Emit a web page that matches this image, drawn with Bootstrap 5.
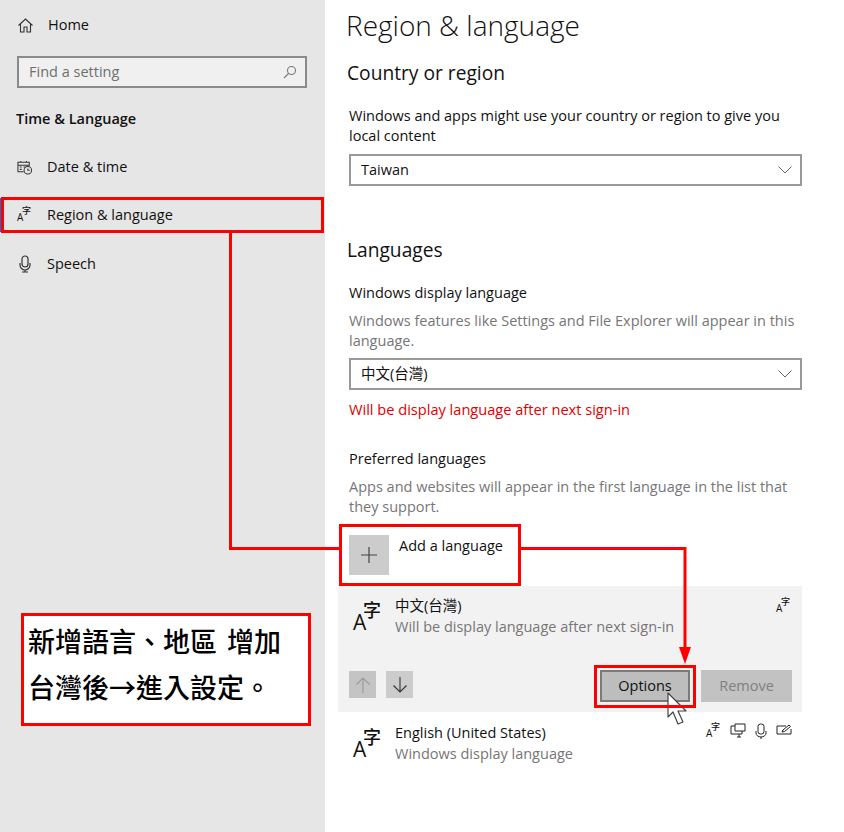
<!DOCTYPE html>
<html lang="en"><head><meta charset="utf-8"><title>Region &amp; language</title>
<link href="https://cdn.jsdelivr.net/npm/bootstrap@5.3.0/dist/css/bootstrap.min.css" rel="stylesheet">
<style>
html,body{margin:0;background:#fff;}
body{font-family:"Open Sans","Noto Sans CJK TC",sans-serif;font-size:14.5px;line-height:20px;color:#111;}
.stage{position:relative;width:844px;height:832px;overflow:hidden;}
.side{width:325px;flex:none;background:#e6e6e6;padding-top:15px;}
.side-row{height:20px;padding-left:17px;gap:14px;}
.side-row svg{flex:none;}
.side-row.r2{margin-top:28px;}
.find{margin:21px 17px 0 17px;height:32px;width:290px;border:2px solid #8a8a8a;background:#f0f0f0;color:#6f6f6f;padding:0 8px 0 10px;}
.side-h{margin:21px 0 0 16px;font-weight:600;height:20px;}
.picked{position:absolute;left:0;top:198px;width:3px;height:34px;background:#0078d7;}
.content{width:519px;flex:none;padding-left:24px;}
.ttl{font-size:28px;line-height:50px;height:50px;margin:0 0 9px -3px;font-weight:300;}
.sub{font-size:19.2px;line-height:28px;height:28px;margin:0 0 19px -2px;font-weight:400;}
.para{width:453px;margin:0;}
.grey{color:#767676;}
.pick{width:453px;height:32px;border:2px solid #999;padding:0 8px 0 10px;margin-top:8px;background:#fff;}
.redline{color:#e00000;margin:9px 0 0;height:20px;font-size:14.6px;}
.addrow{margin-top:18px;height:51px;gap:10px;}
.plus{width:40px;height:40px;background:#ccc;}
.panel{margin-left:-11px;width:464px;height:126px;background:#f2f2f2;padding:12px 10px 10px 11px;}
.plain{margin-left:-11px;width:464px;padding:13px 10px 0 11px;}
.gly{width:46px;flex:none;position:relative;height:40px;}
.bigA{position:absolute;left:4px;top:14px;font-size:21px;line-height:20px;}
.bigZ{position:absolute;left:14px;top:2px;font-size:18px;line-height:20px;font-weight:500;}
.tinyg{position:relative;width:16px;height:16px;display:inline-block;flex:none;}
.tinyA{position:absolute;left:0;top:5px;font-size:10px;line-height:11px;}
.tinyZ{position:absolute;left:5px;top:-2px;font-size:9px;line-height:11px;font-weight:500;}
.sq{width:27px;height:27px;background:#ccc;border-radius:0;padding:0;margin-top:1px;}
.btn.sq.off:disabled{background:#c4c4c4;opacity:1;border:0;}
.wbtn{height:32px;border-radius:0;padding:0;font-size:14.500px;line-height:20px;font-family:inherit;}
.optb{width:90px;background:#bdbdbd;border:2px solid #7a7a7a;color:#111;}
.btn.remb:disabled{width:91px;background:#c2c2c2;border:0;color:#808080;margin-left:11px;opacity:1;}
.lift{margin-top:-2px;}
.drop{margin-top:1px;}
.rbox{position:absolute;border:3px solid #f00;}
.note{left:21px;top:613px;width:290px;height:113px;background:#fff;padding:2px 4px;font-family:"Noto Sans CJK TC",sans-serif;font-size:27px;line-height:46px;color:#000;font-weight:500;white-space:nowrap;word-spacing:4px;}
.over{position:absolute;left:0;top:0;pointer-events:none;}
</style></head>
<body>
<div class="stage d-flex">
  <nav class="side">
    <div class="side-row d-flex align-items-center">
      <svg width="17" height="17" viewBox="0 0 17 17" fill="none" stroke="#333" stroke-width="1.1"><path d="M1.5 8.5 8.5 2l7 6.500M3.500 7v8h3.500v-5h3v5h3.500V7"/></svg><span>Home</span>
    </div>
    <div class="find d-flex align-items-center justify-content-between"><span>Find a setting</span>
      <svg width="14" height="14" viewBox="0 0 14 14" fill="none" stroke="#777" stroke-width="1.1"><circle cx="8.500" cy="5.500" r="4"/><path d="M5.500 8.500 1 13"/></svg></div>
    <div class="side-h">Time &amp; Language</div>
    <div class="side-row d-flex align-items-center" style="margin-top:28px">
      <svg width="16" height="17" viewBox="0 0 17 17" fill="none" stroke="#333" stroke-width="1.1"><path d="M7 13H1V3h12v4M1 6h12M4 1.500v2M10 1.500v2M3 8h2M7 8h2M3 10.500h2"/><circle cx="11.500" cy="11.500" r="4"/><path d="M11.500 9.500v2h2"/></svg><span>Date &amp; time</span>
    </div>
    <div class="side-row r2 d-flex align-items-center">
      <span class="tinyg"><span class="tinyA">A</span><span class="tinyZ">字</span></span><span>Region &amp; language</span>
    </div>
    <div class="side-row r2 d-flex align-items-center" style="margin-top:29px">
      <svg width="16" height="18" viewBox="0 0 16 18" fill="none" stroke="#333" stroke-width="1.200"><rect x="5" y="1" width="6" height="11" rx="3"/><path d="M3 8v2a5 5 0 0 0 10 0V8M8 15v2M5 17h6"/></svg><span>Speech</span>
    </div>
  </nav>
  <main class="content">
    <h1 class="ttl">Region &amp; language</h1>
    <h2 class="sub">Country or region</h2>
    <p class="para">Windows and apps might use your country or region to give you local content</p>
    <div class="pick d-flex align-items-center justify-content-between"><span>Taiwan</span>
      <svg width="14" height="8" viewBox="0 0 14 8" fill="none" stroke="#666"><path d="M.5.500 7 7l6.500-6.500"/></svg></div>
    <h2 class="sub" style="margin-top:50px">Languages</h2>
    <p class="para">Windows display language</p>
    <p class="para grey" style="margin-top:8px">Windows features like Settings and File Explorer will appear in this language.</p>
    <div class="pick d-flex align-items-center justify-content-between" style="margin-top:7px"><span>中文(台灣)</span>
      <svg width="14" height="8" viewBox="0 0 14 8" fill="none" stroke="#666"><path d="M.5.500 7 7l6.500-6.500"/></svg></div>
    <p class="redline">Will be display language after next sign-in</p>
    <p class="para" style="margin-top:30px">Preferred languages</p>
    <p class="para grey" style="margin-top:8px">Apps and websites will appear in the first language in the list that they support.</p>
    <div class="addrow d-flex align-items-start">
      <div class="plus d-flex align-items-center justify-content-center"><svg width="18" height="18" viewBox="0 0 18 18" stroke="#444" stroke-width="1.200"><path d="M9 1v16M1 9h16"/></svg></div>
      <span style="margin-top:1px">Add a language</span>
    </div>
    <section class="panel d-flex flex-column justify-content-between">
      <div class="d-flex">
        <div class="gly"><span class="bigA">A</span><span class="bigZ">字</span></div>
        <div class="flex-grow-1"><div class="lift">中文(台灣)</div><div class="grey drop">Will be display language after next sign-in</div></div>
        <span class="tinyg"><span class="tinyA">A</span><span class="tinyZ">字</span></span>
      </div>
      <div class="d-flex align-items-start">
        <button class="btn sq off d-flex align-items-center justify-content-center" disabled><svg width="18" height="18" viewBox="0 0 18 18" fill="none" stroke="#999" stroke-width="1.100"><path d="M9 17V2M2.500 8.500 9 2l6.500 6.500"/></svg></button>
        <button class="btn sq d-flex align-items-center justify-content-center border-0" style="margin-left:10px"><svg width="18" height="18" viewBox="0 0 18 18" fill="none" stroke="#333" stroke-width="1.100"><path d="M9 1v15M2.500 9.500 9 16l6.500-6.500"/></svg></button>
        <div class="flex-grow-1"></div>
        <button class="btn wbtn optb">Options</button>
        <button class="btn wbtn remb" disabled>Remove</button>
      </div>
    </section>
    <section class="plain d-flex">
      <div class="gly"><span class="bigA">A</span><span class="bigZ">字</span></div>
      <div class="flex-grow-1"><div class="lift">English (United States)</div><div class="grey drop">Windows display language</div></div>
      <div class="d-flex gap-2 lift">
        <span class="tinyg"><span class="tinyA">A</span><span class="tinyZ">字</span></span>
        <svg width="16" height="16" viewBox="0 0 16 16" fill="none" stroke="#222"><path d="M5 3H1v8h11V8M5 1h10v7H5zM7 14h4M9 11v3"/></svg>
        <svg width="14" height="16" viewBox="0 0 14 16" fill="none" stroke="#222"><rect x="4" y="1" width="6" height="10" rx="2.500"/><path d="M2 8v2a5 4 0 0 0 10 0V8M7 14v2"/></svg>
        <svg width="16" height="14" viewBox="0 0 16 14" fill="none" stroke="#222"><path d="M10 3H1v8h14V6M6 9l1-2 6-5 1.500 1.500-6 5z"/></svg>
      </div>
    </section>
  </main>

  <div class="picked"></div>
  <svg class="over" width="844" height="832" viewBox="0 0 844 832" fill="none">
    <path d="M230.500 233V548.500H340M520 548.500H685V650" stroke="#f00" stroke-width="3"/>
    <path d="M679 647h12l-6 17z" fill="#f00"/>
    <path d="M668 693v24l5-5 5 12 5-2-5-11h8z" fill="#fff" stroke="#444" stroke-width="1.200" stroke-linejoin="round"/>
  </svg>
  <div class="rbox" style="left:1px;top:197px;width:323px;height:36px"></div>
  <div class="rbox" style="left:339px;top:524px;width:182px;height:62px"></div>
  <div class="rbox" style="left:594px;top:665px;width:102px;height:43px"></div>
  <div class="rbox note">新增語言、地區 增加<br>台灣後→進入設定。</div>
</div>
<script src="https://cdn.jsdelivr.net/npm/bootstrap@5.3.0/dist/js/bootstrap.bundle.min.js"></script>
</body></html>
